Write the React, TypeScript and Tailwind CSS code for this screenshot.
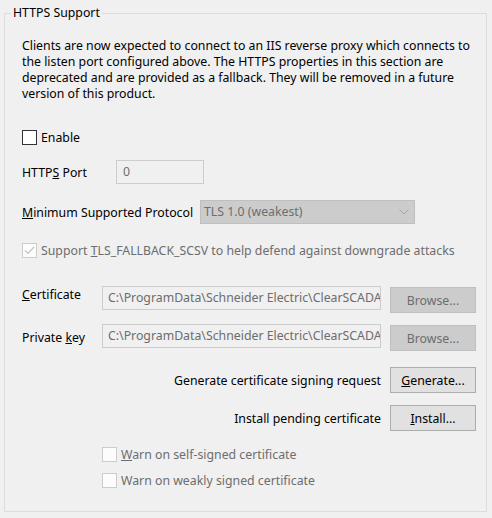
import React from "react";

const font = { fontFamily: '"Noto Sans", "Open Sans", sans-serif' };

function CheckBox({ checked, disabled }: { checked?: boolean; disabled?: boolean }) {
  return (
    <span
      className={`flex h-[15px] w-[15px] shrink-0 items-center justify-center border ${
        disabled ? "border-[#cccccc] bg-[#fcfcfc]" : "border-[#333333] bg-white"
      }`}
    >
      {checked && (
        <svg width="11" height="9" viewBox="0 0 11 9" fill="none">
          <path d="M1 4.5 L4 7.5 L10 1" stroke="#c4c4c4" strokeWidth="1.2" />
        </svg>
      )}
    </span>
  );
}

function Btn({ children, disabled }: { children: React.ReactNode; disabled?: boolean }) {
  return (
    <div
      className={`flex h-[26px] w-[86px] shrink-0 items-center justify-center border pt-[1px] ${
        disabled ? "border-[#bfbfbf] bg-[#cccccc] text-[#6d6d6d]" : "border-[#adadad] bg-[#e1e1e1] text-black"
      }`}
    >
      {children}
    </div>
  );
}

export default function App() {
  const path = "C:\\ProgramData\\Schneider Electric\\ClearSCADA\\Certificates\\server.pem";
  return (
    <div className="h-[518px] w-[492px] bg-[#f0f0f0] pt-[5px] pl-[4px] text-[12.3px] leading-[16px] text-black" style={font}>
      <fieldset className="h-[507px] w-[483px] border border-[#dcdcdc] px-0">
        <legend className="ml-[6px] px-[2px] leading-[16px]">HTTPS Support</legend>

        <div className="pl-[17px] pr-[10px]">
          {/* notice */}
          <p className="mt-[17px] whitespace-nowrap leading-[16px]">
            Clients are now expected to connect to an IIS reverse proxy which connects to
            <br />
            the listen port configured above. The HTTPS properties in this section are
            <br />
            deprecated and are provided as a fallback. They will be removed in a future
            <br />
            version of this product.
          </p>

          {/* enable */}
          <div className="mt-[27px] flex h-[16px] items-center gap-[4px]">
            <CheckBox />
            <span className="pt-[1px]">Enable</span>
          </div>

          {/* port */}
          <div className="mt-[15px] flex h-[24px] items-center">
            <span className="w-[94px] pt-[1px]">
              HTTP<u>S</u> Port
            </span>
            <div className="flex h-[24px] w-[88px] items-center border border-[#cccccc] bg-[#f0f0f0] pl-[6px] text-[#6d6d6d]">
              0
            </div>
          </div>

          {/* protocol */}
          <div className="mt-[16px] flex h-[24px] items-center">
            <span className="w-[178px] whitespace-nowrap pt-[1px]">
              <u>M</u>inimum Supported Protocol
            </span>
            <div className="flex h-[24px] w-[215px] items-center justify-between border border-[#bfbfbf] bg-[#cccccc] pl-[3px] pr-[5px] text-[#6d6d6d]">
              <span>TLS 1.0 (weakest)</span>
              <svg width="10" height="6" viewBox="0 0 10 6" fill="none">
                <path d="M0.5 0.5 L5 5 L9.5 0.5" stroke="#a6a6a6" strokeWidth="1" />
              </svg>
            </div>
          </div>

          {/* fallback */}
          <div className="mt-[18px] flex h-[16px] items-center gap-[4px] whitespace-nowrap text-[#6d6d6d]">
            <CheckBox checked disabled />
            <span className="pt-[1px]">
              Support <u>T</u>LS_FALLBACK_SCSV to help defend against downgrade attacks
            </span>
          </div>

          {/* certificate */}
          <div className="mt-[28px] flex h-[27px] items-start">
            <span className="mt-[1px] w-[80px]">
              <u>C</u>ertificate
            </span>
            <div className="flex h-[24px] w-[279px] items-center overflow-hidden whitespace-nowrap border border-[#cccccc] bg-[#f0f0f0] pl-[5px] text-[#6d6d6d]">
              {path}
            </div>
            <div className="ml-[9px] mt-[1px]">
              <Btn disabled>Browse...</Btn>
            </div>
          </div>

          {/* private key */}
          <div className="mt-[11px] flex h-[27px] items-start">
            <span className="mt-[6px] w-[80px]">
              Private <u>k</u>ey
            </span>
            <div className="flex h-[24px] w-[279px] items-center overflow-hidden whitespace-nowrap border border-[#cccccc] bg-[#f0f0f0] pl-[5px] text-[#6d6d6d]">
              {path}
            </div>
            <div className="ml-[9px] mt-[1px]">
              <Btn disabled>Browse...</Btn>
            </div>
          </div>

          {/* csr */}
          <div className="mt-[16px] flex h-[26px] items-center justify-end gap-[9px]">
            <span className="pt-[1px]">Generate certificate signing request</span>
            <Btn>
              <span>
                <u>G</u>enerate...
              </span>
            </Btn>
          </div>

          <div className="mt-[12px] flex h-[26px] items-center justify-end gap-[9px]">
            <span className="pt-[1px]">Install pending certificate</span>
            <Btn>
              <span>
                <u>I</u>nstall...
              </span>
            </Btn>
          </div>

          {/* warnings */}
          <div className="mt-[15px] ml-[80px] flex h-[16px] items-center gap-[4px] text-[#6d6d6d]">
            <CheckBox disabled />
            <span className="pt-[1px]">
              <u>W</u>arn on self-signed certificate
            </span>
          </div>
          <div className="mt-[10px] ml-[80px] flex h-[16px] items-center gap-[4px] text-[#6d6d6d]">
            <CheckBox disabled />
            <span className="pt-[1px]">Warn on weakly signed certificate</span>
          </div>
        </div>
      </fieldset>
    </div>
  );
}
